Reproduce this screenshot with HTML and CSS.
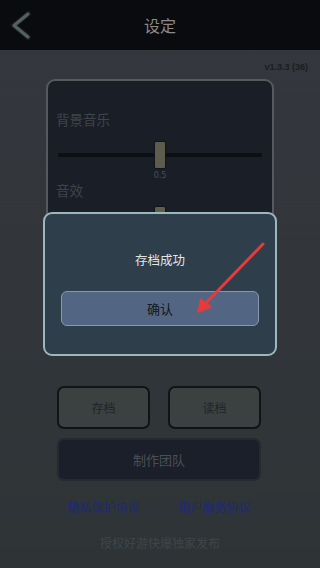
FILE: index.html
```html
<!DOCTYPE html>
<html lang="zh">
    <head>
        <meta charset="utf-8">
        <title>设定</title>
        <meta name="viewport" content="width=device-width, initial-scale=1">
        <link rel="stylesheet" href="styles.css">
    </head>
    <body>

        <header class="topbar">
            <svg class="topbar__back" width="40" height="50" viewBox="0 0 40 50">
                <path d="M28 14 L14 25.5 L28 37" fill="none" stroke="#1b2124" stroke-width="5.5" stroke-linecap="round" stroke-linejoin="round"/>
                <path d="M28 14 L14 25.5 L28 37" fill="none" stroke="#53615f" stroke-width="3" stroke-linecap="round" stroke-linejoin="round"/>
            </svg>
            <h1 class="topbar__title">设定</h1>
        </header>

        <main class="settings">
            <div class="settings__version">v1.3.3 (36)</div>

            <section class="panel">
                <div class="panel__label">背景音乐</div>
                <div class="slider"><span class="slider__thumb"></span></div>
                <div class="slider__value">0.5</div>
                <div class="panel__label panel__label--next">音效</div>
                <div class="slider slider--second"><span class="slider__thumb"></span></div>
            </section>

            <div class="actions">
                <button class="btn">存档</button>
                <button class="btn">读档</button>
            </div>
            <button class="btn btn--team">制作团队</button>

            <nav class="links">
                <a class="links__item">隐私保护协议</a>
                <a class="links__item">用户服务协议</a>
            </nav>

            <p class="footer">授权好游快爆独家发布</p>
        </main>

        <div class="dialog">
            <p class="dialog__text">存档成功</p>
            <button class="dialog__ok">确认</button>
        </div>

        <svg class="pointer" width="320" height="568" viewBox="0 0 320 568">
            <line x1="263" y1="244" x2="203" y2="306" stroke="#e63a3c" stroke-width="3" stroke-linecap="round"/>
            <polygon points="198,312 201,299 211,307" fill="#e63a3c" stroke="#e63a3c" stroke-width="1.5" stroke-linejoin="round"/>
        </svg>

    </body>
</html>
```

FILE: styles.css
```css
* {
    box-sizing: border-box;
}

body {
    margin: 0;
    padding: 0;
    width: 320px;
    height: 568px;
    overflow: hidden;
    position: relative;
    font-family: "Noto Sans CJK SC", "Noto Sans", sans-serif;
    background: linear-gradient(to bottom, #34373d 0%, #32363b 50%, #2e3436 100%);
}

.topbar {
    height: 50px;
    background-color: #0a0b0e;
    display: flex;
    align-items: center;
    justify-content: center;
    position: relative;
}

.topbar__back {
    position: absolute;
    left: 0;
    top: 0;
}

.topbar__title {
    margin: 0;
    font-size: 16px;
    font-weight: normal;
    color: #8a8a8a;
    line-height: 20px;
}

.settings__version {
    padding: 11px 12px 0 0;
    height: 29px;
    text-align: right;
    font-family: "Liberation Sans", sans-serif;
    font-size: 9px;
    font-weight: bold;
    line-height: 12px;
    color: #1b1e23;
}

.panel {
    margin: 0 46px;
    height: 272px;
    padding: 28px 0 0 0;
    border: 2px solid #56595e;
    border-radius: 9px;
    background-color: #1a1f27;
}

.panel__label {
    padding-left: 8px;
    font-size: 13.5px;
    line-height: 20px;
    color: #3f444c;
}

.panel__label--next {
    margin-top: -1px;
}

.slider {
    margin: 12px 10px 0;
    height: 28px;
    display: flex;
    justify-content: center;
    background: linear-gradient(to bottom, transparent 12px, #0c0f13 12px, #0c0f13 16px, transparent 16px);
}

.slider--second {
    margin-top: 6px;
}

.slider__thumb {
    width: 12px;
    height: 28px;
    background-color: #5d5c4d;
    border: 1px solid #11141a;
    border-radius: 2px;
}

.slider__value {
    text-align: center;
    font-family: "DejaVu Sans", sans-serif;
    font-size: 8px;
    line-height: 10px;
    margin-top: 2px;
    color: #4a4f56;
}

.actions {
    margin: 35px 59px 0 57px;
    display: grid;
    grid-template-columns: 1fr 1fr;
    gap: 18px;
}

.btn {
    height: 43px;
    margin: 0;
    padding: 0;
    border: 2px solid #111316;
    border-radius: 7px;
    background-color: #3a4140;
    font-family: inherit;
    font-size: 12px;
    color: #20252a;
}

.btn--team {
    display: block;
    width: 204px;
    margin: 9px 0 0 57px;
    background-color: #1b1f29;
    border-color: #262a30;
    font-size: 13px;
    color: #4a4f56;
}

.links {
    margin: 18px 59px 0 57px;
    display: grid;
    grid-template-columns: 1fr 1fr;
    gap: 18px;
    text-align: center;
}

.links__item {
    font-size: 12px;
    line-height: 16px;
    color: #1d2a74;
}

.footer {
    margin: 20px 0 0;
    text-align: center;
    font-size: 12px;
    line-height: 16px;
    color: #3f4649;
}

.dialog {
    position: absolute;
    left: 43px;
    top: 212px;
    width: 234px;
    height: 144px;
    padding: 36px 16px 0;
    border: 2px solid #9ab8bd;
    border-radius: 9px;
    background-color: #2e3e4a;
    display: flex;
    flex-direction: column;
}

.dialog__text {
    margin: 0;
    text-align: center;
    font-size: 12.5px;
    line-height: 20px;
    color: #e2e4e6;
}

.dialog__ok {
    margin-top: 21px;
    height: 35px;
    border: 1px solid #8797ae;
    border-radius: 6px;
    background-color: #526684;
    font-family: inherit;
    font-size: 13px;
    color: #14171b;
}

.pointer {
    position: absolute;
    left: 0;
    top: 0;
}
```
